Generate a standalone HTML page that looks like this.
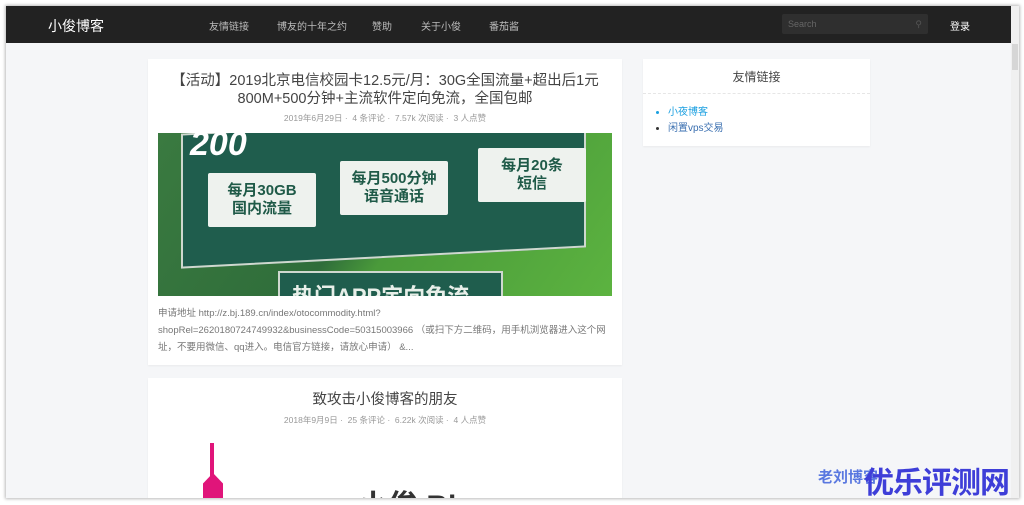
<!DOCTYPE html>
<html><head><meta charset="utf-8"><style>
*{margin:0;padding:0;box-sizing:border-box}
body{width:1024px;height:505px;background:#fff;font-family:"Liberation Sans","Noto Sans CJK SC",sans-serif;position:relative;overflow:hidden}
.frame{position:absolute;left:6px;top:6px;width:1013px;height:492px;background:#f5f6f8;overflow:hidden;box-shadow:0 0 3px 1px #bbb}
.nav{position:absolute;left:0;top:0;width:1005px;height:37px;background:#222}
.nav .logo{position:absolute;left:42px;top:10px;color:#fff;font-size:14px}
.nav .m{position:absolute;top:12px;color:#bbb;font-size:10px}
.search{position:absolute;left:776px;top:8px;width:146px;height:20px;background:#2f2f2f;border-radius:2px;color:#666;font-size:9px;padding:5px 6px}
.login{position:absolute;left:944px;top:12px;color:#fff;font-size:10px}
.sb{position:absolute;left:1005px;top:0;width:8px;height:492px;background:#f0f0f0}
.sb i{position:absolute;left:1px;top:38px;width:6px;height:26px;background:#d6d6d6}
.card{position:absolute;background:#fff;box-shadow:0 1px 2px rgba(0,0,0,.05)}
.t{text-align:center;color:#444;font-size:14.5px;line-height:18px}
.meta{text-align:center;color:#999;font-size:8.5px}
.img{position:absolute;left:10px;top:74px;width:454px;height:163px;overflow:hidden;background:linear-gradient(125deg,#3a7a40 0,#2f6d3a 45%,#4a9a3a 55%,#5cb340 100%)}
.ex{position:absolute;left:10px;top:246px;width:455px;color:#777;font-size:9.5px;line-height:17px}
.box{position:absolute;background:#eef2ee;color:#1f5a48;font-weight:bold;font-size:15px;text-align:center;line-height:18px;border-radius:2px}
</style></head><body>
<div class="frame">
<div class="nav">
<div class="logo">小俊博客</div>
<div class="m" style="left:203px">友情链接</div>
<div class="m" style="left:271px">博友的十年之约</div>
<div class="m" style="left:366px">赞助</div>
<div class="m" style="left:415px">关于小俊</div>
<div class="m" style="left:483px">番茄酱</div>
<div class="search">Search<span style="float:right;color:#555">&#9906;</span></div>
<div class="login">登录</div>
</div>
<div class="sb"><i></i></div>

<div class="card" style="left:142px;top:53px;width:474px;height:306px">
<div class="t" style="margin-top:13px">【活动】2019北京电信校园卡12.5元/月：30G全国流量+超出后1元<br>800M+500分钟+主流软件定向免流，全国包邮</div>
<div class="meta" style="margin-top:4px">2019年6月29日 · &nbsp;4 条评论 · &nbsp;7.57k 次阅读 · &nbsp;3 人点赞</div>
<div class="img">
<div style="position:absolute;left:23px;top:-10px;width:405px;height:135px;background:#1f5d4d;border:2px solid #cfd8cf;transform:skewY(-3deg)"></div>
<div style="position:absolute;left:32px;top:-8px;color:#fff;font-size:34px;font-weight:bold;font-style:italic">200</div>
<div class="box" style="left:50px;top:40px;width:108px;height:54px;padding-top:9px">每月30GB<br>国内流量</div>
<div class="box" style="left:182px;top:28px;width:108px;height:54px;padding-top:9px">每月500分钟<br>语音通话</div>
<div class="box" style="left:320px;top:15px;width:108px;height:54px;padding-top:9px">每月20条<br>短信</div>
<div style="position:absolute;left:120px;top:138px;width:225px;height:40px;background:#1f5d4d;border:2px solid #cfd8cf;color:#e8efe9;font-size:22px;font-weight:bold;padding:6px 0 0 12px">热门APP定向免流</div>
</div>
<div class="ex">申请地址 http://z.bj.189.cn/index/otocommodity.html?<br>shopRel=2620180724749932&amp;businessCode=50315003966 （或扫下方二维码，用手机浏览器进入这个网址，不要用微信、qq进入。电信官方链接，请放心申请） &amp;...</div>
</div>

<div class="card" style="left:142px;top:372px;width:474px;height:130px">
<div class="t" style="margin-top:13px">致攻击小俊博客的朋友</div>
<div class="meta" style="margin-top:5px">2018年9月9日 · &nbsp;25 条评论 · &nbsp;6.22k 次阅读 · &nbsp;4 人点赞</div>
<div style="position:absolute;left:55px;top:95px;width:20px;height:35px;background:#e0157a;clip-path:polygon(50% 0,100% 30%,100% 100%,0 100%,0 30%)"></div>
<div style="position:absolute;left:62px;top:65px;width:4px;height:40px;background:#e0157a"></div>
<div style="position:absolute;left:210px;top:103px;font-size:30px;color:#333;font-weight:bold">小俊 Blog</div>
</div>

<div class="card" style="left:637px;top:53px;width:227px;height:87px">
<div style="text-align:center;color:#444;font-size:12px;margin-top:9px">友情链接</div>
<div style="border-top:1px dashed #e6e6e6;margin-top:8px"></div>
<ul style="margin:11px 0 0 25px;font-size:10px;line-height:16px;color:#333">
<li style="color:#1a9fe0"><span>小夜博客</span></li>
<li><span style="color:#3a6fb0">闲置vps交易</span></li>
</ul>
</div>

<div style="position:absolute;left:812px;top:460px;color:#5a78e0;font-size:15px;font-weight:bold">老刘博客</div>
<div style="position:absolute;left:858px;top:452px;color:#3e3ed8;font-size:30px;font-weight:bold;letter-spacing:-1px">优乐评测网</div>
</div>
</body></html>
